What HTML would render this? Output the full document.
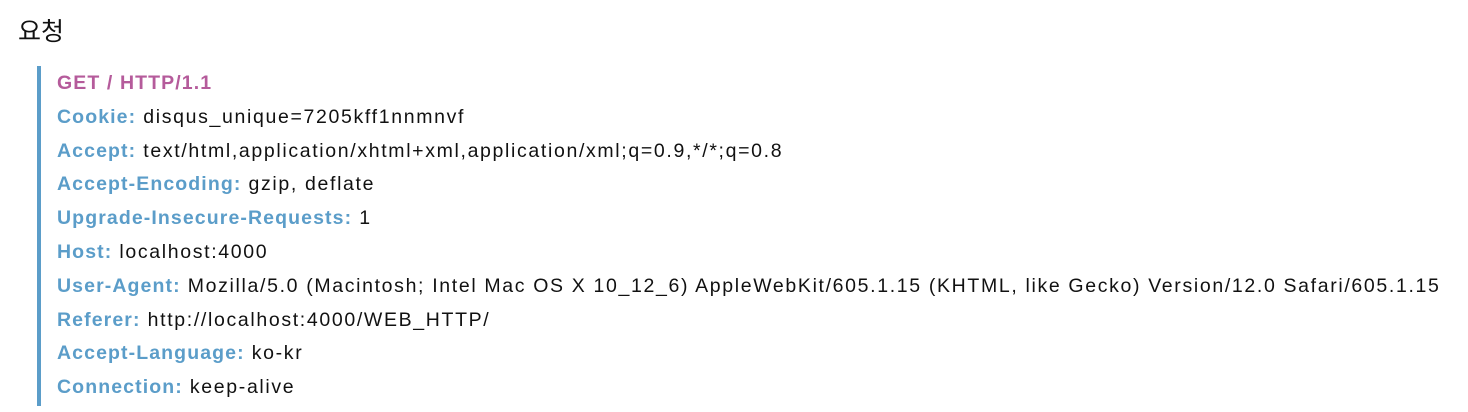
<!DOCTYPE html>
<html><head><meta charset="utf-8"><style>
body{margin:0;background:#fff;width:1468px;height:412px;overflow:hidden;font-family:"Liberation Sans","Noto Sans CJK KR",sans-serif;color:#111;}
h3{position:absolute;left:18px;top:12px;margin:0;font-size:25px;font-weight:normal;font-family:"Liberation Sans","Noto Sans CJK KR",sans-serif;}
.bq{position:absolute;left:37px;top:66px;height:340px;border-left:4px solid #5b9dc9;padding-left:16px;}
.in{padding-top:1px;}
.l{height:33.8px;line-height:33.8px;font-size:19.5px;letter-spacing:1.65px;white-space:nowrap;}
.k{color:#5b9dc9;font-weight:bold;letter-spacing:1.1px;}
.m{color:#b55b9b;font-weight:bold;letter-spacing:1.1px;}
</style></head><body>
<h3>요청</h3>
<div class="bq"><div class="in">
<div class="l m">GET / HTTP/1.1</div>
<div class="l"><span class="k">Cookie:</span> disqus_unique=7205kff1nnmnvf</div>
<div class="l"><span class="k">Accept:</span> text/html,application/xhtml+xml,application/xml;q=0.9,*/*;q=0.8</div>
<div class="l"><span class="k">Accept-Encoding:</span> gzip, deflate</div>
<div class="l"><span class="k">Upgrade-Insecure-Requests:</span> 1</div>
<div class="l"><span class="k">Host:</span> localhost:4000</div>
<div class="l"><span class="k">User-Agent:</span> Mozilla/5.0 (Macintosh; Intel Mac OS X 10_12_6) AppleWebKit/605.1.15 (KHTML, like Gecko) Version/12.0 Safari/605.1.15</div>
<div class="l"><span class="k">Referer:</span> http://localhost:4000/WEB_HTTP/</div>
<div class="l"><span class="k">Accept-Language:</span> ko-kr</div>
<div class="l"><span class="k">Connection:</span> keep-alive</div>
</div></div>
</body></html>
